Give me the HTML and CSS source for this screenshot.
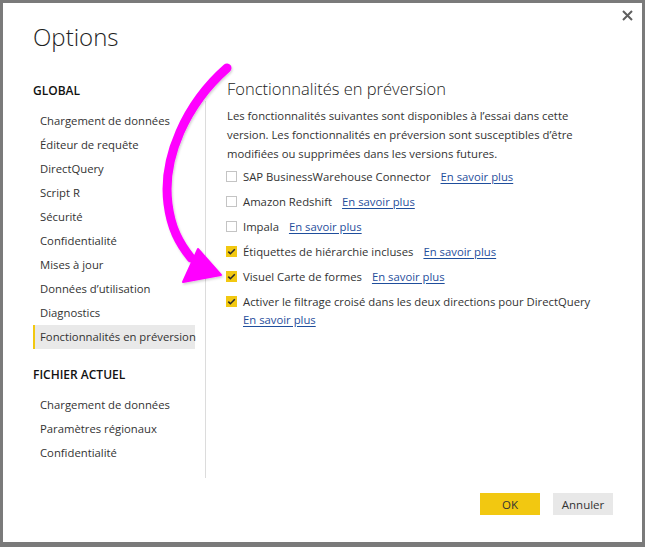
FILE: index.html
```html
<!DOCTYPE html>
<html lang="fr">
<head>
<meta charset="utf-8">
<title>Options</title>
<link rel="stylesheet" href="styles.css">
</head>
<body>
<div class="dialog">
  <div class="header">
    <h1 class="title">Options</h1>
    <button class="close" aria-label="Fermer">
      <svg width="11" height="11" viewBox="0 0 11 11"><path d="M1 1L10 10M10 1L1 10" stroke="#5f5f5f" stroke-width="2" fill="none"/></svg>
    </button>
  </div>
  <div class="body">
    <nav class="nav">
      <div class="nav-head">GLOBAL</div>
      <div class="nav-item">Chargement de données</div>
      <div class="nav-item">Éditeur de requête</div>
      <div class="nav-item">DirectQuery</div>
      <div class="nav-item">Script R</div>
      <div class="nav-item">Sécurité</div>
      <div class="nav-item">Confidentialité</div>
      <div class="nav-item">Mises à jour</div>
      <div class="nav-item">Données d’utilisation</div>
      <div class="nav-item">Diagnostics</div>
      <div class="nav-item selected">Fonctionnalités en préversion</div>
      <div class="nav-head second">FICHIER ACTUEL</div>
      <div class="nav-item">Chargement de données</div>
      <div class="nav-item">Paramètres régionaux</div>
      <div class="nav-item">Confidentialité</div>
    </nav>
    <div class="divider"></div>
    <section class="content">
      <h2 class="section-title">Fonctionnalités en préversion</h2>
      <p class="desc">Les fonctionnalités suivantes sont disponibles à l’essai dans cette version. Les fonctionnalités en préversion sont susceptibles d’être modifiées ou supprimées dans les versions futures.</p>
      <div class="opts">
        <div class="opt"><span class="cb"></span><div class="lbl"><span>SAP BusinessWarehouse Connector</span><a href="#">En savoir plus</a></div></div>
        <div class="opt"><span class="cb"></span><div class="lbl"><span>Amazon Redshift</span><a href="#">En savoir plus</a></div></div>
        <div class="opt"><span class="cb"></span><div class="lbl"><span>Impala</span><a href="#">En savoir plus</a></div></div>
        <div class="opt"><span class="cb on"><svg width="11" height="11" viewBox="0 0 11 11"><path d="M2.3 5.6L4.4 7.7L8.8 3.2" stroke="#2b2b2b" stroke-width="1.6" fill="none"/></svg></span><div class="lbl"><span>Étiquettes de hiérarchie incluses</span><a href="#">En savoir plus</a></div></div>
        <div class="opt"><span class="cb on"><svg width="11" height="11" viewBox="0 0 11 11"><path d="M2.3 5.6L4.4 7.7L8.8 3.2" stroke="#2b2b2b" stroke-width="1.6" fill="none"/></svg></span><div class="lbl"><span>Visuel Carte de formes</span><a href="#">En savoir plus</a></div></div>
        <div class="opt"><span class="cb on"><svg width="11" height="11" viewBox="0 0 11 11"><path d="M2.3 5.6L4.4 7.7L8.8 3.2" stroke="#2b2b2b" stroke-width="1.6" fill="none"/></svg></span><div class="lbl"><span>Activer le filtrage croisé dans les deux directions pour DirectQuery</span><a href="#">En savoir plus</a></div></div>
      </div>
    </section>
  </div>
  <div class="footer">
    <button class="btn ok">OK</button>
    <button class="btn cancel">Annuler</button>
  </div>
</div>
<svg class="arrow" width="645" height="547" viewBox="0 0 645 547">
  <defs>
    <filter id="sh" x="-20%" y="-20%" width="140%" height="140%">
      <feDropShadow dx="1" dy="1.5" stdDeviation="1.2" flood-color="#000" flood-opacity="0.18"/>
    </filter>
  </defs>
  <g filter="url(#sh)" fill="#ff00ff">
    <path d="M227 68 C 186 104 162 158 168 204 C 171 228 179 243 191 258" stroke="#ff00ff" stroke-width="9" stroke-linecap="round" fill="none"/>
    <polygon points="221,275 198,249 183,282" stroke="#ff00ff" stroke-width="2" stroke-linejoin="round"/>
  </g>
</svg>
</body>
</html>
```
FILE: styles.css
```css
html, body {
  margin: 0;
  padding: 0;
}
body {
  background: #7a7a7a;
  width: 645px;
  height: 547px;
  overflow: hidden;
  position: relative;
  font-family: "Open Sans", "Noto Sans", sans-serif;
  font-size: 11.3px;
  color: #333;
}
.dialog {
  margin: 3px 3px 5px 3px;
  width: 639px;
  height: 539px;
  background: #fff;
  box-sizing: border-box;
  padding-left: 30px;
  display: flex;
  flex-direction: column;
}
.header {
  display: flex;
  justify-content: space-between;
  align-items: flex-start;
  height: 76px;
  padding-right: 9px;
}
.title {
  margin: 19px 0 0 0;
  font-weight: 300;
  font-size: 24px;
  line-height: 30px;
  color: #1e1e1e;
}
.close {
  margin-top: 7px;
  width: 11px;
  height: 11px;
  padding: 0;
  border: 0;
  background: none;
  display: block;
}
.close svg { display: block; }
.body {
  display: flex;
  height: 399px;
}
.nav {
  width: 162px;
  display: flex;
  flex-direction: column;
}
.nav-head {
  height: 24px;
  line-height: 24px;
  font-weight: 600;
  font-size: 12px;
  color: #111;
  margin-bottom: 6px;
}
.nav-head.second {
  margin-top: 14px;
}
.nav-item {
  height: 24px;
  line-height: 24px;
  padding-left: 7px;
  color: #333;
  white-space: nowrap;
}
.nav-item.selected {
  background: #e9e9e9;
  border-left: 2px solid #f2c811;
  padding-left: 5px;
}
.divider {
  width: 1px;
  background: #dcdcdc;
  margin-top: 22px;
  margin-left: 10px;
}
.content {
  padding-left: 21px;
  flex: 1;
  padding-right: 28px;
}
.section-title {
  margin: 0;
  font-weight: 300;
  font-size: 16.5px;
  line-height: 20px;
  color: #222;
}
.desc {
  margin: 7px 0 0 0;
  line-height: 19px;
  color: #333;
  max-width: 352px;
}
.opts {
  margin-top: 5px;
  display: flex;
  flex-direction: column;
  gap: 7px;
}
.opt {
  display: flex;
  align-items: flex-start;
  line-height: 18px;
}
.cb {
  flex: none;
  width: 11px;
  height: 11px;
  box-sizing: border-box;
  border: 1px solid #c4c4c4;
  background: #fff;
  margin-top: 3px;
  margin-right: 6px;
  margin-left: -1px;
  display: block;
  position: relative;
}
.cb.on {
  background: #f2c811;
  border-color: #f2c811;
}
.cb svg {
  position: absolute;
  left: -1px;
  top: -1px;
}
.lbl {
  display: flex;
  flex-wrap: wrap;
  column-gap: 10px;
}
.lbl a {
  color: #1f4e9c;
  text-decoration: underline;
  text-underline-offset: 2px;
}
.footer {
  display: flex;
  justify-content: flex-end;
  gap: 13px;
  padding-right: 29px;
  margin-top: 15px;
}
.btn {
  width: 60px;
  height: 22px;
  border: 0;
  padding: 0;
  font-family: "Open Sans", "Noto Sans", sans-serif;
  font-size: 11.5px;
  color: #333;
}
.ok { background: #f2c811; }
.cancel { background: #e8e8e8; }
.arrow {
  position: absolute;
  left: 0;
  top: 0;
  pointer-events: none;
}
```
